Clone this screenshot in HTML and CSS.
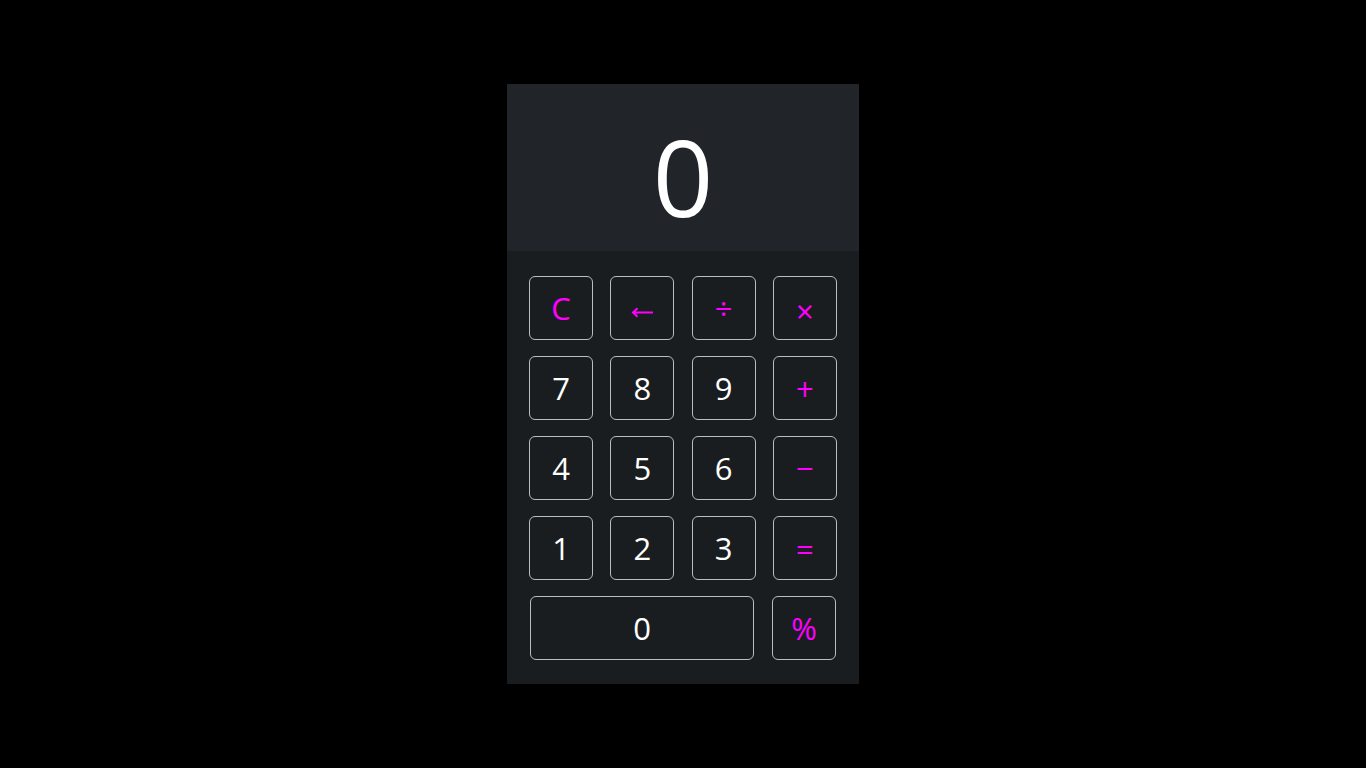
FILE: index.html
```html
<!DOCTYPE html>
<html lang="en">
<head>
<meta charset="utf-8">
<title>Calculator</title>
<link rel="stylesheet" href="styles.css">
</head>
<body>
<main class="page">
  <section class="calc">
    <div class="display">0</div>
    <div class="keypad">
      <div class="row">
        <button class="key op">C</button>
        <button class="key op arrow" aria-label="Backspace"><svg class="arrow-icon" width="23" height="11" viewBox="0 0 23 11"><path d="M22 5.5H2.5M6.5 1.2L2 5.5L6.5 9.8" fill="none" stroke="#ff00ff" stroke-width="2"/></svg></button>
        <button class="key op">÷</button>
        <button class="key op times">×</button>
      </div>
      <div class="row">
        <button class="key">7</button>
        <button class="key">8</button>
        <button class="key">9</button>
        <button class="key op low">+</button>
      </div>
      <div class="row">
        <button class="key">4</button>
        <button class="key">5</button>
        <button class="key">6</button>
        <button class="key op">−</button>
      </div>
      <div class="row">
        <button class="key">1</button>
        <button class="key">2</button>
        <button class="key">3</button>
        <button class="key op low">=</button>
      </div>
      <div class="row last">
        <button class="key wide">0</button>
        <button class="key op">%</button>
      </div>
    </div>
  </section>
</main>
</body>
</html>
```

FILE: styles.css
```css
html, body {
  margin: 0;
  padding: 0;
  background: #000;
  height: 100%;
}

.page {
  height: 768px;
  display: flex;
  justify-content: center;
  align-items: flex-start;
  padding-top: 84px;
  box-sizing: border-box;
  font-family: "Open Sans", "Noto Sans", sans-serif;
}

.calc {
  width: 352px;
  height: 600px;
  display: flex;
  flex-direction: column;
  background: #1a1d20;
}

.display {
  height: 167px;
  background: #212529;
  color: #fff;
  font-size: 106px;
  line-height: 1;
  display: flex;
  justify-content: center;
  align-items: center;
  padding-top: 16px;
  box-sizing: border-box;
}

.keypad {
  flex: 1;
  padding: 25px 22px 24px;
  display: flex;
  flex-direction: column;
  gap: 16px;
}

.row {
  display: flex;
  justify-content: space-between;
}

.row.last {
  padding: 0 1px;
}

.key {
  width: 64px;
  height: 64px;
  box-sizing: border-box;
  border: 1px solid #b9bdc1;
  border-radius: 6px;
  background: transparent;
  color: #fff;
  font-family: "Open Sans", "Noto Sans", sans-serif;
  font-size: 31px;
  line-height: 1;
  padding: 0;
  display: flex;
  align-items: center;
  justify-content: center;
}

.key.op {
  color: #ff00ff;
}

.key.arrow {
  padding-top: 8px;
}

.arrow-icon {
  display: block;
}

.key.times {
  padding-top: 6px;
}

.key.low {
  padding-top: 3px;
}

.key.wide {
  width: 224px;
}
```
